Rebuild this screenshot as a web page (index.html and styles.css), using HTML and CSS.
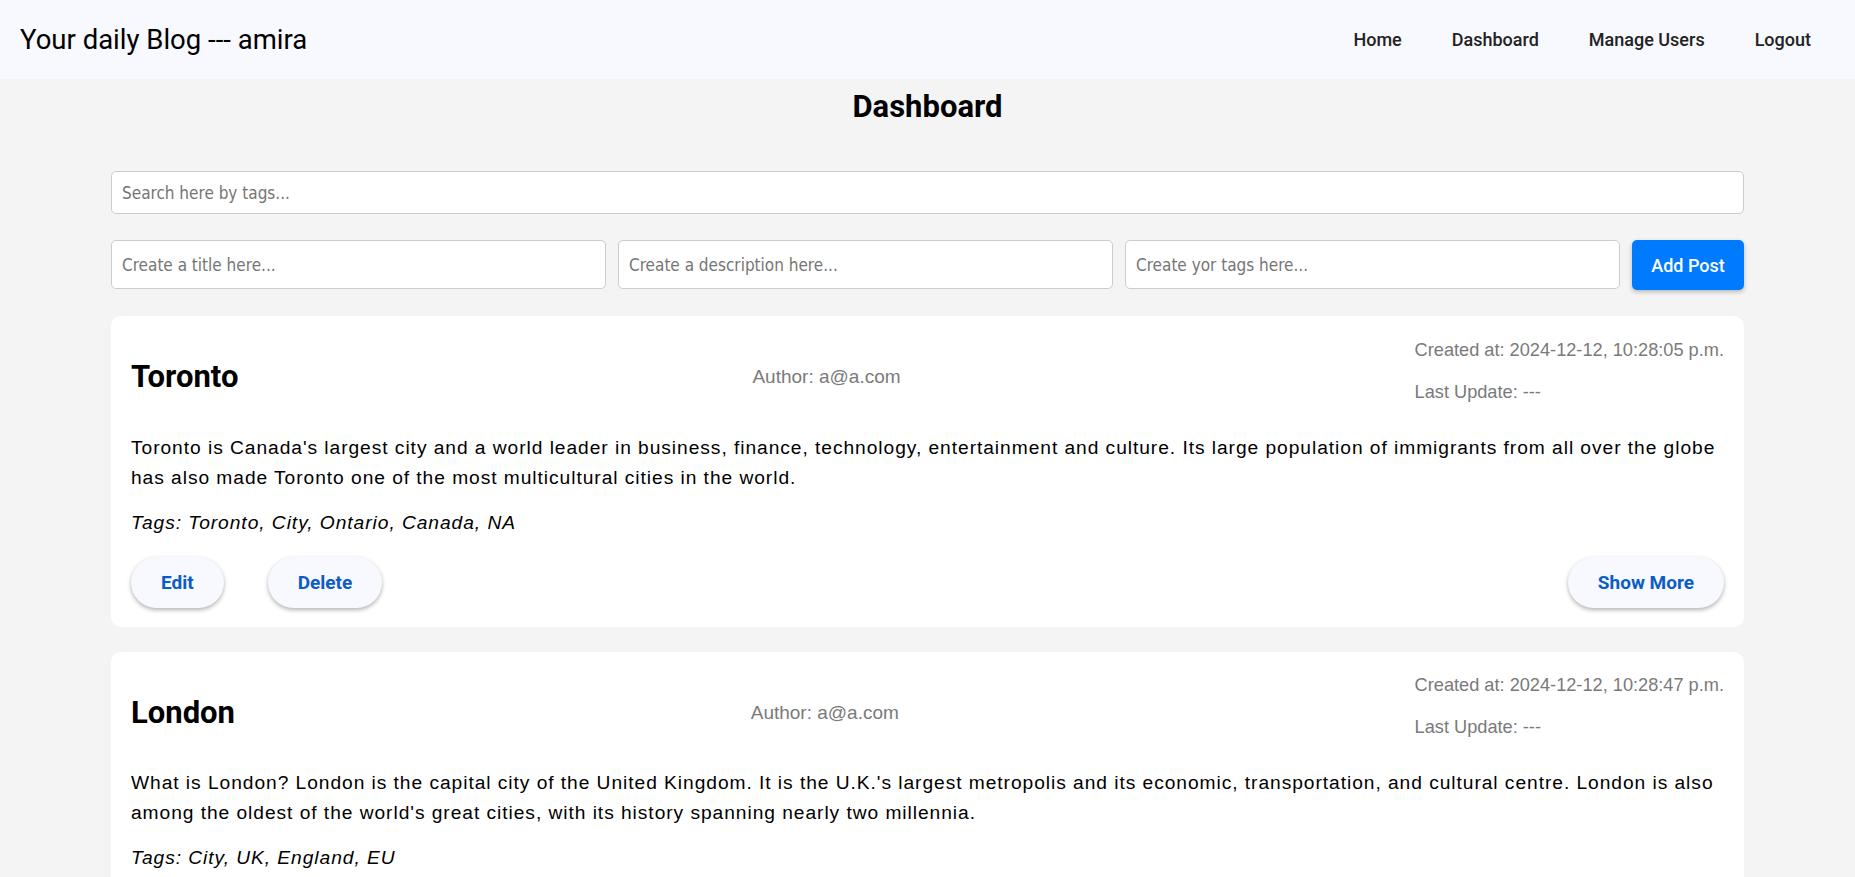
FILE: index.html
```html
<!DOCTYPE html>
<html lang="en">
<head>
<meta charset="utf-8">
<title>Your daily Blog - Dashboard</title>
<link rel="stylesheet" href="styles.css">
</head>
<body>
<nav class="navbar">
  <div class="brand">Your daily Blog --- amira</div>
  <ul class="nav-links">
    <li><a href="#">Home</a></li>
    <li><a href="#">Dashboard</a></li>
    <li><a href="#">Manage Users</a></li>
    <li><a href="#">Logout</a></li>
  </ul>
</nav>
<main class="container">
  <h1 class="page-title">Dashboard</h1>
  <input class="field search" type="text" placeholder="Search here by tags...">
  <form class="new-post">
    <input class="field grow" type="text" placeholder="Create a title here...">
    <input class="field grow" type="text" placeholder="Create a description here...">
    <input class="field grow" type="text" placeholder="Create yor tags here...">
    <button class="add-btn" type="button">Add Post</button>
  </form>

  <article class="post">
    <header class="post-head">
      <h2 class="post-title">Toronto</h2>
      <span class="author">Author: a@a.com</span>
      <div class="dates">
        <p class="date">Created at: 2024-12-12, 10:28:05 p.m.</p>
        <p class="date">Last Update: ---</p>
      </div>
    </header>
    <p class="post-body">Toronto is Canada's largest city and a world leader in business, finance, technology, entertainment and culture. Its large population of immigrants from all over the globe has also made Toronto one of the most multicultural cities in the world.</p>
    <p class="post-tags">Tags: Toronto, City, Ontario, Canada, NA</p>
    <div class="actions">
      <button class="pill" type="button">Edit</button>
      <button class="pill" type="button">Delete</button>
      <button class="pill more" type="button">Show More</button>
    </div>
  </article>

  <article class="post">
    <header class="post-head">
      <h2 class="post-title">London</h2>
      <span class="author">Author: a@a.com</span>
      <div class="dates">
        <p class="date">Created at: 2024-12-12, 10:28:47 p.m.</p>
        <p class="date">Last Update: ---</p>
      </div>
    </header>
    <p class="post-body">What is London? London is the capital city of the United Kingdom. It is the U.K.'s largest metropolis and its economic, transportation, and cultural centre. London is also among the oldest of the world's great cities, with its history spanning nearly two millennia.</p>
    <p class="post-tags">Tags: City, UK, England, EU</p>
    <div class="actions">
      <button class="pill" type="button">Edit</button>
      <button class="pill" type="button">Delete</button>
      <button class="pill more" type="button">Show More</button>
    </div>
  </article>
</main>
</body>
</html>
```
FILE: styles.css
```css
* { box-sizing: border-box; }

html, body {
  margin: 0;
  padding: 0;
}

body {
  background: #f4f4f4;
  font-family: "Liberation Sans", Arial, sans-serif;
  color: #000;
}

.navbar {
  height: 79px;
  background: #f8f8ff;
  display: flex;
  align-items: center;
  justify-content: space-between;
  padding: 0 44px 0 20px;
}

.brand {
  font-family: Roboto, sans-serif;
  font-size: 27.5px;
  font-weight: 400;
  color: #000;
}

.nav-links {
  list-style: none;
  margin: 0;
  padding: 0;
  display: flex;
  gap: 50px;
}

.nav-links a {
  font-family: Roboto, sans-serif;
  font-size: 18px;
  font-weight: 500;
  color: #222;
  text-decoration: none;
}

.container {
  margin: 0 111px;
  padding-bottom: 40px;
}

.page-title {
  font-family: Roboto, sans-serif;
  font-size: 31px;
  font-weight: 700;
  line-height: 36px;
  text-align: center;
  margin: 10px 0 46px;
}

.field {
  display: block;
  height: 43px;
  border: 1px solid #ccc;
  border-radius: 5px;
  background: #fff;
  padding: 0 10px;
  font-family: "DejaVu Sans Condensed", "DejaVu Sans", sans-serif;
  font-size: 17px;
  color: #333;
  outline: none;
}

.field::placeholder {
  color: #757575;
}

.search {
  width: 100%;
}

.new-post {
  display: flex;
  gap: 12px;
  margin: 26px 0 26px;
}

.new-post .field {
  height: 49px;
}

.grow {
  flex: 1 1 0;
  min-width: 0;
}

.add-btn {
  width: 112px;
  height: 50px;
  border: none;
  border-radius: 5px;
  background: #007bff;
  color: #fff;
  font-family: Roboto, sans-serif;
  font-size: 18px;
  font-weight: 500;
  box-shadow: 0 2px 4px rgba(0, 0, 0, 0.25);
}

.post {
  background: #fff;
  border-radius: 10px;
  padding: 20px 20px 19px;
  margin-bottom: 25px;
}

.post-head {
  display: flex;
  justify-content: space-between;
  align-items: flex-start;
}

.post-title {
  font-family: Roboto, sans-serif;
  font-size: 31px;
  font-weight: 700;
  line-height: 34px;
  margin: 24px 0 0;
}

.author {
  font-size: 19px;
  color: #7a7a7a;
  margin-top: 30px;
}

.dates {
  padding-top: 3.5px;
}

.date {
  font-size: 18.2px;
  line-height: 21px;
  color: #7a7a7a;
  margin: 0;
}

.date + .date {
  margin-top: 21px;
}

.post-body {
  font-size: 19.2px;
  line-height: 30px;
  letter-spacing: 0.95px;
  margin: 30px 0 0;
}

.post-tags {
  font-size: 19.2px;
  line-height: 22px;
  letter-spacing: 0.95px;
  font-style: italic;
  margin: 19px 0 0;
}

.actions {
  display: flex;
  gap: 44px;
  margin-top: 23px;
}

.pill {
  height: 51px;
  padding: 0 30px;
  border: none;
  border-radius: 26px;
  background: #f8f8ff;
  color: #0b5cc4;
  font-family: Roboto, sans-serif;
  font-size: 19px;
  font-weight: 700;
  box-shadow: 0 2px 4px rgba(0, 0, 0, 0.3);
}

.pill.more {
  margin-left: auto;
}
```
